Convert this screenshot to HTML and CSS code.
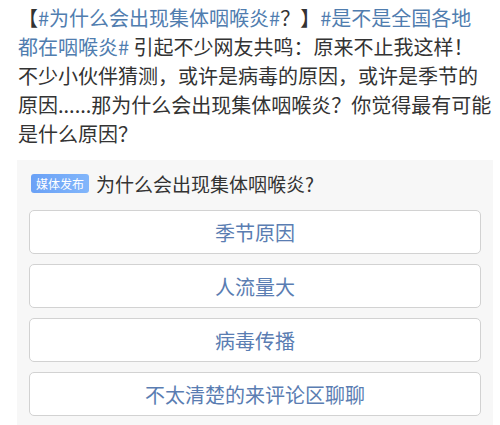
FILE: index.html
```html
<!DOCTYPE html>
<html lang="zh-CN">
<head>
    <meta charset="UTF-8">
    <meta name="viewport" content="width=device-width, initial-scale=1.0">
    <title>为什么会出现集体咽喉炎？</title>
    <link rel="stylesheet" href="styles.css">
</head>
<body>
    <!-- 微博正文 -->
    <p class="post-text">【<a class="topic">#为什么会出现集体咽喉炎#</a>？】<a class="topic">#是不是全国各地<br>都在咽喉炎#</a> 引起不少网友共鸣：原来不止我这样！<br>不少小伙伴猜测，或许是病毒的原因，或许是季节的<br>原因......那为什么会出现集体咽喉炎？你觉得最有可能<br>是什么原因？</p>

    <!-- 投票卡片 -->
    <div class="vote-card">
        <div class="vote-title">
            <span class="badge">媒体发布</span>
            <span class="question">为什么会出现集体咽喉炎?</span>
        </div>
        <button type="button" class="option">季节原因</button>
        <button type="button" class="option">人流量大</button>
        <button type="button" class="option">病毒传播</button>
        <button type="button" class="option">不太清楚的来评论区聊聊</button>
    </div>
</body>
</html>
```

FILE: styles.css
```css
body {
    margin: 0;
    background-color: #fff;
    font-family: "Noto Sans CJK SC", "Noto Sans", sans-serif;
    color: #333;
}

.post-text {
    margin: 0;
    padding: 3px 0 0 18px;
    font-size: 20px;
    line-height: 29px;
    white-space: nowrap;
}

.topic {
    color: #507daf;
    text-decoration: none;
}

.vote-card {
    margin: 12px 7px 0 17px;
    padding: 12px 12px 9px;
    background-color: #f7f7f7;
}

.vote-title {
    display: flex;
    align-items: center;
    height: 22px;
    margin-bottom: 16px;
}

.badge {
    display: inline-block;
    height: 19px;
    line-height: 19px;
    padding: 0 5px;
    margin-left: 2px;
    margin-right: 7px;
    border-radius: 3px;
    background: linear-gradient(to right, #6aa1f6, #82b6fb);
    color: #fff;
    font-size: 12px;
}

.question {
    font-size: 19px;
    color: #333;
}

.option {
    display: block;
    width: 100%;
    height: 44px;
    margin-bottom: 10px;
    border: 1px solid #d2d2d2;
    border-radius: 5px;
    background-color: #fff;
    color: #5a7db2;
    font-family: inherit;
    font-size: 20px;
}
```
